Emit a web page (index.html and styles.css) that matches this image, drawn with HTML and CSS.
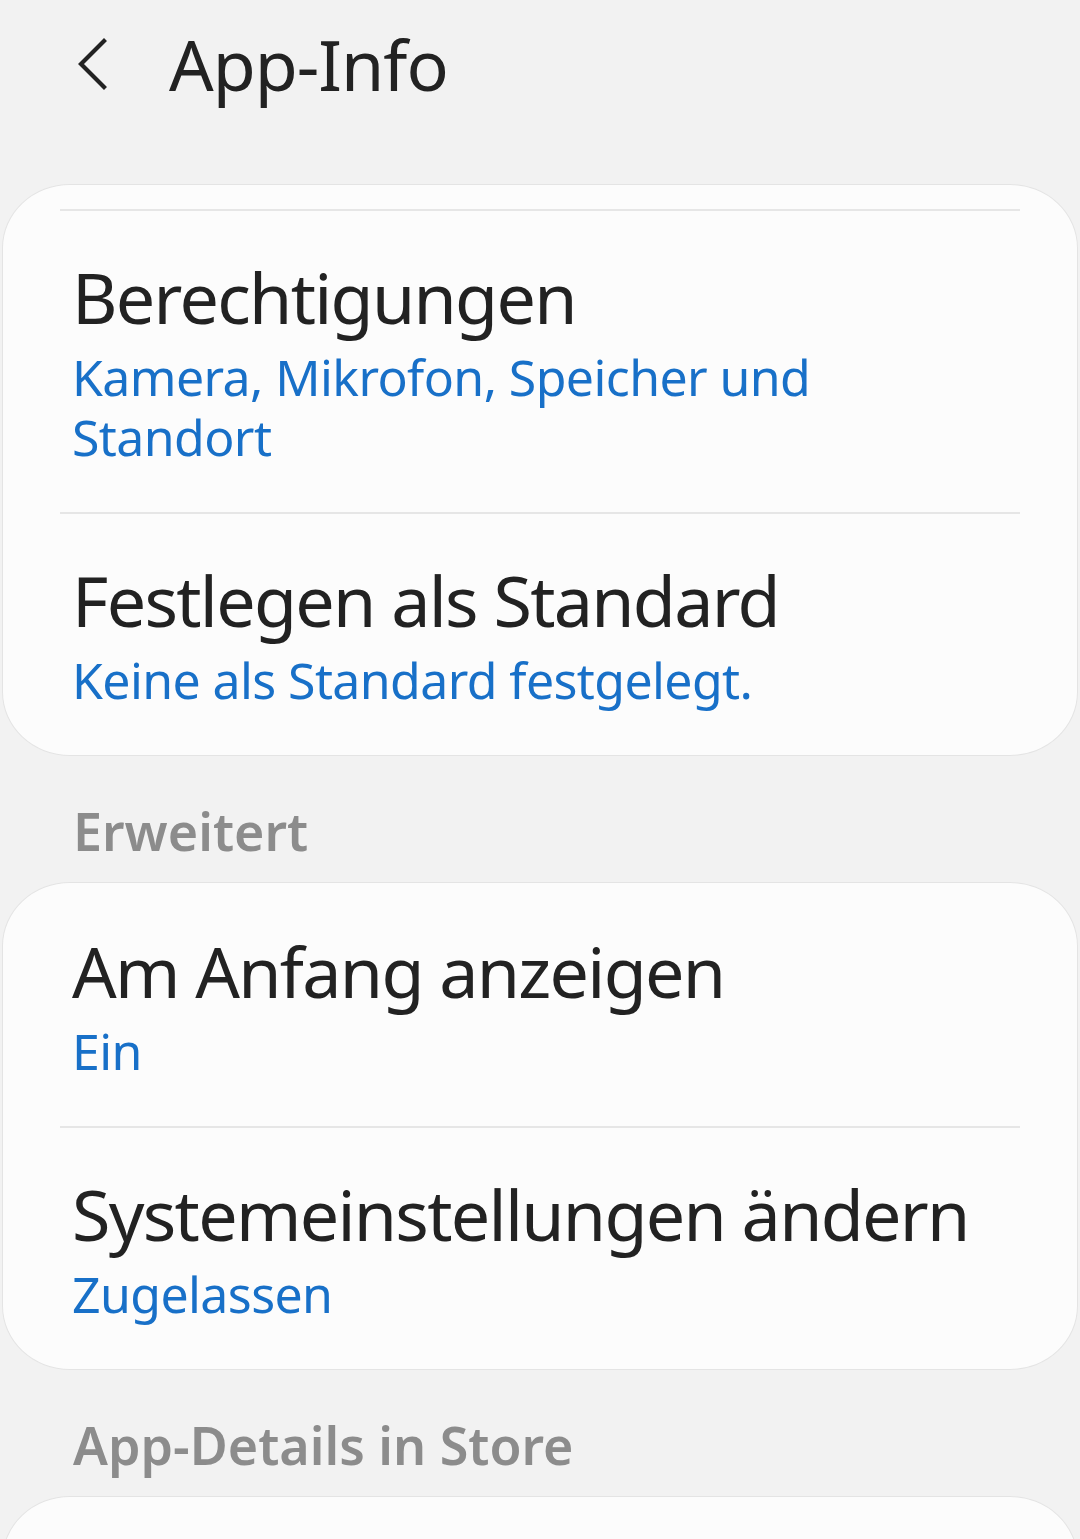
FILE: index.html
```html
<!DOCTYPE html>
<html lang="de">
<head>
  <meta charset="UTF-8">
  <title>App-Info</title>
  <link rel="stylesheet" href="styles.css">
</head>
<body>
  <div id="screen">
    <div class="topBar">
      <svg class="backIcon" width="34" height="52" viewBox="0 0 34 52">
        <path d="M28 3 L5 26 L28 49" fill="none" stroke="#222" stroke-width="4.2" stroke-linecap="square"/>
      </svg>
      <div class="topTitle">App-Info</div>
    </div>

    <div class="card">
      <div class="cardTop"></div>
      <div class="row">
        <div class="rowTitle">Berechtigungen</div>
        <div class="rowSub">Kamera, Mikrofon, Speicher und<br>Standort</div>
      </div>
      <div class="row">
        <div class="rowTitle">Festlegen als Standard</div>
        <div class="rowSub">Keine als Standard festgelegt.</div>
      </div>
    </div>

    <div class="sectionLabel">Erweitert</div>

    <div class="card">
      <div class="row first">
        <div class="rowTitle">Am Anfang anzeigen</div>
        <div class="rowSub">Ein</div>
      </div>
      <div class="row">
        <div class="rowTitle">Systemeinstellungen ändern</div>
        <div class="rowSub">Zugelassen</div>
      </div>
    </div>

    <div class="sectionLabel">App-Details in Store</div>

    <div class="card tail"></div>
  </div>
</body>
</html>
```

FILE: styles.css
```css
* { box-sizing: border-box; margin: 0; padding: 0; }
html, body {
  width: 100%;
  height: 100%;
  background: #f2f2f2;
  font-family: "Noto Sans", "Open Sans", sans-serif;
  color: #222;
  overflow: hidden;
}

#screen {
  display: flex;
  flex-direction: column;
}

/* Header */
.topBar {
  display: flex;
  align-items: center;
  height: 184px;
  padding: 0 0 56px 76px;
}
.backIcon { flex-shrink: 0; margin-right: 59px; }
.topTitle {
  font-size: 70px;
  line-height: 80px;
  letter-spacing: -1px;
}

/* Cards */
.card {
  margin: 0 2px;
  background: #fcfcfc;
  border: 1px solid #e4e4e4;
  border-radius: 68px / 64px;
}
.card.tail { min-height: 200px; }
.cardTop { height: 24px; }

.row {
  margin: 0 57px;
  padding: 50px 0 45px 12px;
  border-top: 2px solid #e6e6e6;
}
.row.first { border-top-color: transparent; }

.rowTitle {
  font-size: 70px;
  line-height: 72px;
  letter-spacing: -1.7px;
}
.rowSub {
  margin-top: 14px;
  font-size: 50px;
  line-height: 60px;
  letter-spacing: -0.6px;
  color: #1870c8;
}

.sectionLabel {
  margin: 44px 0 20px;
  padding-left: 73px;
  font-size: 52px;
  line-height: 62px;
  font-weight: 600;
  color: #8c8c8c;
}
```
